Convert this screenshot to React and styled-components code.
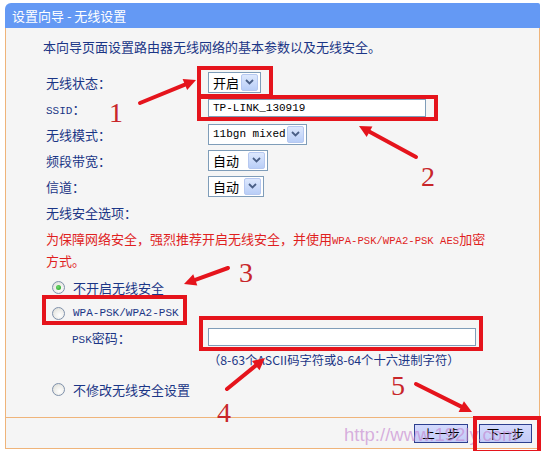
import React from "react";
import styled, { createGlobalStyle } from "styled-components";

const GlobalStyle = createGlobalStyle`
  body {
    margin: 0;
    background: #ffffff;
    font-family: "Noto Sans CJK SC", "DejaVu Sans", sans-serif;
  }
`;

const CJK = `"Noto Sans CJK SC", "DejaVu Sans", sans-serif`;
const MONO = `"Liberation Mono", "Noto Sans CJK SC", monospace`;

const Frame = styled.div`
  position: relative;
  width: 547px;
  height: 451px;
  overflow: hidden;
  padding-top: 3px;
  box-sizing: border-box;
`;

const Wizard = styled.div`
  margin-left: 5px;
  width: 535px;
`;

const TitleBar = styled.div`
  height: 25px;
  background: #6499f4;
  border-top-left-radius: 6px;
  border-top-right-radius: 2px;
  color: #ffffff;
  font-family: ${CJK};
  font-size: 13px;
  display: flex;
  align-items: center;
  padding-left: 7px;
`;

const Panel = styled.div`
  background: #f5f5f5;
  border: 1px solid #efb47a;
  border-top: none;
`;

const Body = styled.div`
  height: 390px;
  box-sizing: border-box;
  padding-top: 9px;
  border-bottom: 1px solid #efb47a;
`;

const Intro = styled.div`
  padding-left: 37px;
  line-height: 20px;
  font-size: 13px;
  color: #1b3686;
`;

const Form = styled.div`
  margin-top: 12px;
  padding-left: 40px;
  display: grid;
  grid-template-columns: 162px auto;
  grid-auto-rows: 26px;
  align-items: center;
`;

const Label = styled.span`
  font-size: 13px;
  color: #1b3686;
  white-space: nowrap;
`;

const Latin = styled.span`
  font-family: ${MONO};
  font-size: 11px;
`;

const SectionLabel = styled.div`
  padding-left: 40px;
  height: 26px;
  display: flex;
  align-items: center;
  font-size: 13px;
  color: #1b3686;
`;

const Warning = styled.div`
  margin-top: 4px;
  padding-left: 40px;
  line-height: 19px;
  font-size: 13px;
  color: #e01f1f;
  white-space: nowrap;
`;

const WarnLatin = styled.span`
  font-family: ${MONO};
  font-size: 10.6px;
`;

const Choices = styled.div`
  margin-top: 4px;
  padding-left: 46px;
  display: flex;
  flex-direction: column;
`;

const RadioRow = styled.label`
  height: 26px;
  margin-top: ${(p) => p.$gap || 0}px;
  display: flex;
  align-items: center;
  gap: 8px;
  font-size: 13px;
  color: #1b3686;
`;

const Radio = styled.span`
  position: relative;
  width: 13px;
  height: 13px;
  box-sizing: border-box;
  border-radius: 50%;
  border: 1px solid #7f91ab;
  background: radial-gradient(circle at 60% 65%, #ffffff 0%, #ecece8 55%, #d6d6d0 100%);

  &::after {
    content: "";
    display: ${(p) => (p.$checked ? "block" : "none")};
    position: absolute;
    left: 3px;
    top: 3px;
    width: 5px;
    height: 5px;
    border-radius: 50%;
    background: radial-gradient(circle at 40% 40%, #6fd86f, #1f9e1f);
  }
`;

const PskRow = styled.div`
  height: 22px;
  display: grid;
  grid-template-columns: 136px auto;
  align-items: center;
  padding-left: 20px;
`;

const Hint = styled.div`
  margin-top: 2px;
  height: 20px;
  line-height: 20px;
  padding-left: 156px;
  font-size: 12.3px;
  color: #1b3686;
  white-space: nowrap;
`;

const TextInput = styled.div`
  width: ${(p) => p.$w}px;
  height: 18px;
  box-sizing: border-box;
  border: 1px solid #7f9db9;
  background: #ffffff;
  display: flex;
  align-items: center;
  padding-left: 4px;
  font-family: ${MONO};
  font-size: 11px;
  color: #000000;
`;

const SelectBox = styled.div`
  width: ${(p) => p.$w}px;
  height: 21px;
  box-sizing: border-box;
  border: 1px solid #7f9db9;
  background: #ffffff;
  display: flex;
  align-items: center;
  justify-content: space-between;
  padding-left: 4px;
  padding-right: 2px;
  font-size: 13px;
  color: #000000;
`;

const DropButton = styled.span`
  width: 17px;
  height: 17px;
  box-sizing: border-box;
  border: 1px solid #b6c8f0;
  border-radius: 2px;
  background: linear-gradient(#dde8fd, #b9cef7);
  display: flex;
  align-items: center;
  justify-content: center;
`;

const Footer = styled.div`
  height: 30px;
  display: flex;
  align-items: center;
  justify-content: flex-end;
  gap: 11px;
  padding-right: 7px;
`;

const Button = styled.button`
  width: ${(p) => p.$w}px;
  height: 19px;
  padding: 0;
  border: 1px solid #2d3f8e;
  background: linear-gradient(#d4dafd, #c2caf6);
  font-family: ${CJK};
  font-size: 12.5px;
  line-height: 17px;
  color: #000000;
`;

const Watermark = styled.span`
  position: absolute;
  left: 344px;
  top: 424px;
  font-family: "Liberation Sans", Arial, sans-serif;
  font-size: 18.5px;
  color: rgba(196, 130, 206, 0.62);
  pointer-events: none;
  white-space: nowrap;
`;

const Marks = styled.svg`
  position: absolute;
  left: 0;
  top: 0;
  pointer-events: none;
`;

function Select({ value, width, latin }) {
  return (
    <SelectBox $w={width}>
      {latin ? <Latin>{value}</Latin> : <span>{value}</span>}
      <DropButton>
        <svg width="9" height="6" viewBox="0 0 9 6">
          <path d="M1 1 L4.5 4.5 L8 1" fill="none" stroke="#4a5f86" strokeWidth="1.8" />
        </svg>
      </DropButton>
    </SelectBox>
  );
}

const RED = "#e5141c";

function Arrow({ from, to }) {
  const [x1, y1] = from;
  const [x2, y2] = to;
  const dx = x2 - x1;
  const dy = y2 - y1;
  const len = Math.hypot(dx, dy);
  const ux = dx / len;
  const uy = dy / len;
  const hl = 12;
  const hw = 6;
  const bx = x2 - ux * hl;
  const by = y2 - uy * hl;
  const pts = `${x2},${y2} ${bx - uy * hw},${by + ux * hw} ${bx + uy * hw},${by - ux * hw}`;
  return (
    <g>
      <line x1={x1} y1={y1} x2={bx} y2={by} stroke={RED} strokeWidth="4" strokeLinecap="round" />
      <polygon points={pts} fill={RED} />
    </g>
  );
}

const boxes = [
  [199, 68, 72, 28],
  [199, 97, 237, 22],
  [44, 297, 141, 26],
  [201, 318, 280, 31],
  [475, 418, 64, 34],
];

const arrows = [
  { from: [140, 103], to: [196, 80] },
  { from: [416, 157], to: [359, 126] },
  { from: [228, 268], to: [184, 284] },
  { from: [227, 389], to: [265, 358] },
  { from: [416, 384], to: [472, 412] },
];

const numbers = [
  ["1", 116, 122],
  ["2", 428, 186],
  ["3", 246, 282],
  ["4", 224, 422],
  ["5", 398, 395],
];

export default function App() {
  return (
    <>
      <GlobalStyle />
      <Frame>
        <Wizard>
          <TitleBar>设置向导 - 无线设置</TitleBar>
          <Panel>
            <Body>
              <Intro>本向导页面设置路由器无线网络的基本参数以及无线安全。</Intro>
              <Form>
                <Label>无线状态：</Label>
                <Select value="开启" width={53} />
                <Label>
                  <Latin>SSID</Latin>：
                </Label>
                <TextInput $w={218}>TP-LINK_130919</TextInput>
                <Label>无线模式：</Label>
                <Select value="11bgn mixed" width={99} latin />
                <Label>频段带宽：</Label>
                <Select value="自动" width={60} />
                <Label>信道：</Label>
                <Select value="自动" width={56} />
              </Form>
              <SectionLabel>无线安全选项：</SectionLabel>
              <Warning>
                为保障网络安全，强烈推荐开启无线安全，并使用<WarnLatin>WPA-PSK/WPA2-PSK AES</WarnLatin>加密
                <br />
                方式。
              </Warning>
              <Choices>
                <RadioRow>
                  <Radio $checked />
                  不开启无线安全
                </RadioRow>
                <RadioRow>
                  <Radio />
                  <Latin>WPA-PSK/WPA2-PSK</Latin>
                </RadioRow>
                <PskRow>
                  <Label>
                    <Latin>PSK</Latin>密码：
                  </Label>
                  <TextInput $w={268} />
                </PskRow>
                <Hint>（8-63个ASCII码字符或8-64个十六进制字符）</Hint>
                <RadioRow $gap={6}>
                  <Radio />
                  不修改无线安全设置
                </RadioRow>
              </Choices>
            </Body>
            <Footer>
              <Button $w={54}>上一步</Button>
              <Button $w={53}>下一步</Button>
            </Footer>
          </Panel>
        </Wizard>
        <Watermark>http://www.192ly.com</Watermark>
        <Marks width="547" height="451" viewBox="0 0 547 451">
          {boxes.map(([x, y, w, h], i) => (
            <rect key={i} x={x} y={y} width={w} height={h} fill="none" stroke={RED} strokeWidth="4" />
          ))}
          {arrows.map((a, i) => (
            <Arrow key={i} from={a.from} to={a.to} />
          ))}
          {numbers.map(([n, x, y]) => (
            <text key={n} x={x} y={y} textAnchor="middle" fontFamily="Liberation Serif, serif" fontSize="28" fill="#c8262a">
              {n}
            </text>
          ))}
        </Marks>
      </Frame>
    </>
  );
}
